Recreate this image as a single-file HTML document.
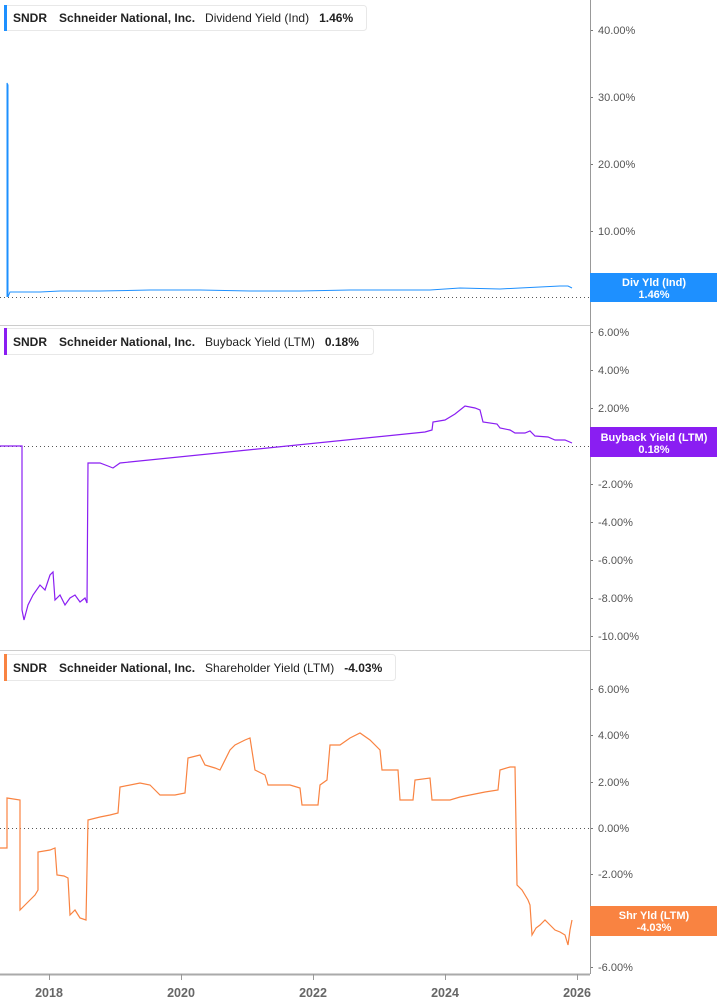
<!DOCTYPE html>
<html><head><meta charset="utf-8"><style>
html,body{margin:0;padding:0;background:#fff;}
svg{display:block;font-family:"Liberation Sans",Arial,sans-serif;}
.ax{fill:#555;font-size:11px;}
.lb{font-size:12px;font-weight:bold;fill:#222;}
.lbn{font-size:12px;fill:#222;}
.yr{fill:#666;font-size:12.5px;font-weight:bold;}
.tg{fill:#fff;font-size:11px;font-weight:bold;}
</style></head><body>
<svg width="717" height="1005" viewBox="0 0 717 1005" xmlns="http://www.w3.org/2000/svg">
<line x1="0" y1="325.5" x2="590" y2="325.5" stroke="#ccc"/>
<line x1="0" y1="650.5" x2="590" y2="650.5" stroke="#ccc"/>
<line x1="590.5" y1="0" x2="590.5" y2="974" stroke="#999"/>
<line x1="0" y1="974.5" x2="590" y2="974.5" stroke="#aaa" stroke-width="2"/>
<g stroke="#999"><line x1="49.5" y1="974" x2="49.5" y2="980"/><line x1="181.5" y1="974" x2="181.5" y2="980"/><line x1="313.5" y1="974" x2="313.5" y2="980"/><line x1="445.5" y1="974" x2="445.5" y2="980"/><line x1="577.5" y1="974" x2="577.5" y2="980"/></g>
<g class="yr" text-anchor="middle"><text x="49" y="997">2018</text><text x="181" y="997">2020</text><text x="313" y="997">2022</text><text x="445" y="997">2024</text><text x="577" y="997">2026</text></g>

<g stroke="#555" stroke-dasharray="1,3"><line x1="0" y1="297.5" x2="590" y2="297.5"/><line x1="0" y1="446.5" x2="590" y2="446.5"/><line x1="0" y1="828.5" x2="590" y2="828.5"/></g>

<g fill="#777">
<rect x="591" y="30" width="2" height="1"/><rect x="591" y="97" width="2" height="1"/><rect x="591" y="164" width="2" height="1"/><rect x="591" y="231" width="2" height="1"/>
<rect x="591" y="332" width="2" height="1"/><rect x="591" y="370" width="2" height="1"/><rect x="591" y="408" width="2" height="1"/><rect x="591" y="484" width="2" height="1"/><rect x="591" y="522" width="2" height="1"/><rect x="591" y="560" width="2" height="1"/><rect x="591" y="598" width="2" height="1"/><rect x="591" y="636" width="2" height="1"/>
<rect x="591" y="689" width="2" height="1"/><rect x="591" y="735" width="2" height="1"/><rect x="591" y="782" width="2" height="1"/><rect x="591" y="828" width="2" height="1"/><rect x="591" y="874" width="2" height="1"/><rect x="591" y="967" width="2" height="1"/>
</g>
<g class="ax">
<text x="598" y="34">40.00%</text><text x="598" y="101">30.00%</text><text x="598" y="168">20.00%</text><text x="598" y="235">10.00%</text><text x="598" y="301">0.00%</text>
<text x="598" y="336">6.00%</text><text x="598" y="374">4.00%</text><text x="598" y="412">2.00%</text><text x="598" y="488">-2.00%</text><text x="598" y="526">-4.00%</text><text x="598" y="564">-6.00%</text><text x="598" y="602">-8.00%</text><text x="598" y="640">-10.00%</text>
<text x="598" y="693">6.00%</text><text x="598" y="739">4.00%</text><text x="598" y="786">2.00%</text><text x="598" y="832">0.00%</text><text x="598" y="878">-2.00%</text><text x="598" y="971">-6.00%</text>
</g>

<polyline fill="none" stroke="#1e90ff" stroke-width="1" points="7,297 7,83 8,85 8,297 10,292 40,292 60,291 100,291 150,290 200,290 250,291 300,291 350,290 400,290 430,290 460,288 500,289 520,288 540,287 560,286 568,286 572,288"/>
<polyline fill="none" stroke="#8a1ef2" stroke-width="1.2" points="0,446 22,446 22,610 24,620 28,605 33,595 40,585 45,590 50,575 53,572 55,600 60,595 65,605 70,598 75,595 80,602 85,598 87,603 88,463 100,463 108,466 113,468 120,463 425,432 432,430 433,422 445,420 455,414 465,406 475,408 480,410 483,422 497,424 500,428 510,430 515,433 525,433 530,431 535,436 548,437 555,440 565,440 572,443"/>
<polyline fill="none" stroke="#f98341" stroke-width="1.2" points="0,848 7,848 7,798 20,800 20,910 25,905 30,900 35,895 38,890 38,852 50,850 55,848 57,875 64,876 68,878 70,915 75,910 80,918 86,920 88,820 100,817 110,815 118,813 120,787 140,783 150,785 155,790 160,795 175,795 185,793 188,758 200,755 205,765 215,768 220,770 230,750 235,745 245,740 250,738 255,770 265,775 268,785 290,785 300,788 302,805 318,805 320,785 327,780 330,745 340,745 350,738 360,733 370,740 380,750 382,770 398,770 400,800 413,800 415,780 430,778 432,800 450,800 460,797 470,795 485,792 498,790 500,770 510,767 515,767 517,885 522,890 528,900 530,905 532,935 536,928 540,925 545,920 550,925 555,930 560,932 565,935 568,945 570,930 572,920"/>

<g>
<rect x="4.5" y="5.5" width="362" height="25" rx="3" fill="#fff" stroke="#e8e8e8"/><rect x="4" y="5" width="3" height="26" fill="#1e90ff"/>
<text x="13" y="22"><tspan class="lb">SNDR</tspan><tspan class="lb" dx="12">Schneider National, Inc.</tspan><tspan class="lbn" dx="10">Dividend Yield (Ind)</tspan><tspan class="lb" dx="10">1.46%</tspan></text>
<rect x="4.5" y="328.5" width="369" height="26" rx="3" fill="#fff" stroke="#e8e8e8"/><rect x="4" y="328" width="3" height="27" fill="#8a1ef2"/>
<text x="13" y="346"><tspan class="lb">SNDR</tspan><tspan class="lb" dx="12">Schneider National, Inc.</tspan><tspan class="lbn" dx="10">Buyback Yield (LTM)</tspan><tspan class="lb" dx="10">0.18%</tspan></text>
<rect x="4.5" y="654.5" width="391" height="26" rx="3" fill="#fff" stroke="#e8e8e8"/><rect x="4" y="654" width="3" height="27" fill="#f98341"/>
<text x="13" y="672"><tspan class="lb">SNDR</tspan><tspan class="lb" dx="12">Schneider National, Inc.</tspan><tspan class="lbn" dx="10">Shareholder Yield (LTM)</tspan><tspan class="lb" dx="10">-4.03%</tspan></text>
</g>

<rect x="590" y="273" width="127" height="29" fill="#1e90ff"/>
<text class="tg" x="654" y="286" text-anchor="middle">Div Yld (Ind)</text><text class="tg" x="654" y="298" text-anchor="middle">1.46%</text>
<rect x="590" y="427" width="127" height="30" fill="#8a1ef2"/>
<text class="tg" x="654" y="441" text-anchor="middle">Buyback Yield (LTM)</text><text class="tg" x="654" y="453" text-anchor="middle">0.18%</text>
<rect x="590" y="906" width="127" height="30" fill="#f98341"/>
<text class="tg" x="654" y="919" text-anchor="middle">Shr Yld (LTM)</text><text class="tg" x="654" y="931" text-anchor="middle">-4.03%</text>
</svg>
</body></html>
